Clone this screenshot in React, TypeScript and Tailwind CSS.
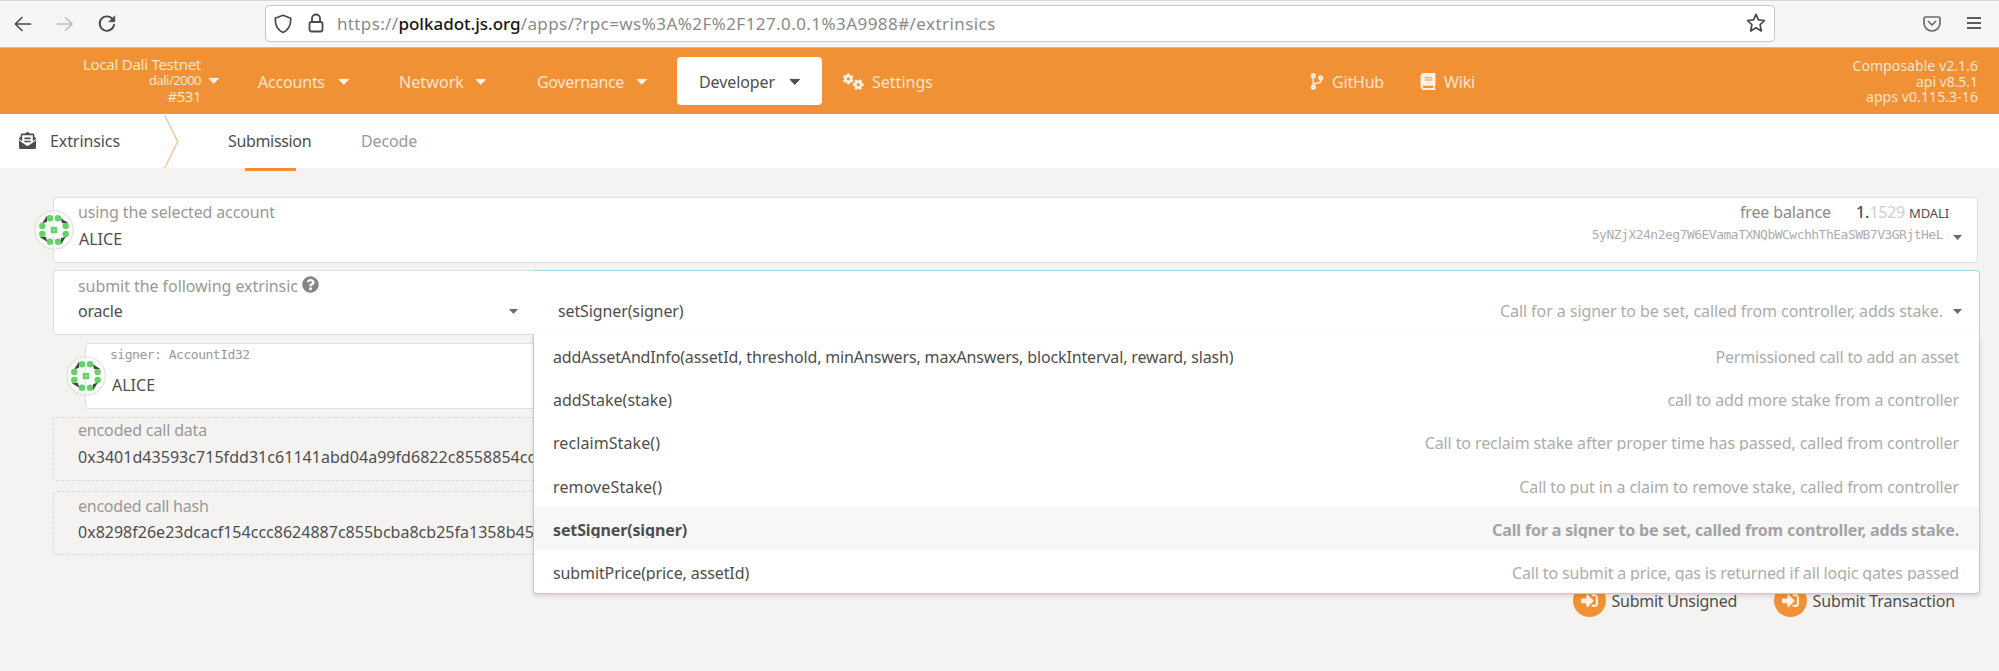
import type { ReactNode } from "react";
import { FaBook, FaCodeBranch, FaEnvelopeOpenText, FaQuestionCircle, FaSignInAlt } from "react-icons/fa";
import { FaGears } from "react-icons/fa6";

function Caret({ className = "" }: { className?: string }) {
  return (
    <svg viewBox="0 0 12 8" className={`h-[8px] w-[12px] shrink-0 ${className}`} fill="currentColor" stroke="currentColor" strokeWidth="1" strokeLinejoin="round">
      <path d="M1 1.4H10.6L5.8 6.4Z" />
    </svg>
  );
}

function SmallCaret({ className = "" }: { className?: string }) {
  return (
    <svg viewBox="0 0 9 5" className={`h-[5px] w-[9px] shrink-0 text-[#6a6a6a] ${className}`} fill="currentColor">
      <path d="M0 0H9L4.500 5Z" />
    </svg>
  );
}

function Avatar({ className = "" }: { className?: string }) {
  const turns = [0, 90, 180, 270];
  return (
    <svg viewBox="-20 -20 40 40" className={`absolute h-[40px] w-[40px] ${className}`}>
      <circle r="19.2" fill="#ffffff" fillOpacity="0.35" stroke="#dedede" strokeWidth="1.1" />
      {turns.map((t) => (
        <g key={t} transform={`rotate(${t})`}>
          <path d="M-11.8 -6.8L-7 -14.400V-8Z" fill="#444" />
          <circle cx="-4" cy="-11.700" r="3.2" fill="#64d16a" />
          <circle cx="4" cy="-11.700" r="3.2" fill="#64d16a" />
        </g>
      ))}
      <rect x="-3.2" y="-3.2" width="6.400" height="6.400" rx="0.800" fill="#64d16a" />
      <circle r="1" fill="#a9e6ac" />
    </svg>
  );
}

function BrowserBar() {
  return (
    <div className="flex h-[48px] shrink-0 border-t border-b border-t-[#d6d6d6] border-b-[#c9bfb3] bg-[#f6f6f6] pt-[4px] text-[#4a4a4a]">
      <svg viewBox="0 0 18 16" className="mt-[11px] ml-[14px] h-[16px] w-[18px]" fill="none" stroke="currentColor" strokeWidth="1.700" strokeLinecap="round" strokeLinejoin="round">
        <path d="M16.500 8H1.500M8 1.500L1.300 8L8 14.500" />
      </svg>
      <svg viewBox="0 0 18 16" className="mt-[11px] ml-[24px] h-[16px] w-[18px] text-[#bdbdbd]" fill="none" stroke="currentColor" strokeWidth="1.700" strokeLinecap="round" strokeLinejoin="round">
        <path d="M1 8H16M9.500 1.500L16.200 8L9.500 14.500" />
      </svg>
      <svg viewBox="0 0 18 18" className="mt-[10px] ml-[24px] h-[18px] w-[18px]" fill="none" stroke="currentColor" strokeWidth="1.900" strokeLinecap="round">
        <path d="M14.600 4.200A7.200 7.200 0 1 0 16 9.800" />
        <path d="M16.700 1.200V6.700H11.200Z" fill="currentColor" strokeWidth="0.800" strokeLinejoin="round" />
      </svg>
      <div className="ml-[149px] flex h-[37px] w-[1510px] rounded-[4px] border border-[#c9c9c9] bg-white">
        <svg viewBox="0 0 18 20" className="mt-[7.500px] ml-[8px] h-[20px] w-[18px]" fill="none" stroke="currentColor" strokeWidth="1.700" strokeLinejoin="round">
          <path d="M9 1.200L16.700 4.300C17 10.500 15.300 15.500 9 18.600C2.700 15.500 1 10.500 1.300 4.300Z" />
        </svg>
        <svg viewBox="0 0 16 20" className="mt-[7px] ml-[16px] h-[20px] w-[16px]" fill="none" stroke="currentColor" strokeWidth="1.800">
          <rect x="1.500" y="9" width="13" height="9.500" rx="2" />
          <path d="M4 9V5.500A4 4 0 0 1 12 5.500V9" />
        </svg>
        <div className="mt-[8px] ml-[13px] flex text-[17px] leading-[20px] text-[#8a8a8a]">
          <span className="tracking-[0.350px]">https://</span>
          <span className="font-medium tracking-[0px] text-[#161616]">polkadot.js.org</span>
          <span className="tracking-[0.430px]">/apps/?rpc=ws%3A%2F%2F127.0.0.1%3A9988#/extrinsics</span>
        </div>
        <svg viewBox="0 0 20 20" className="mt-[7px] mr-[8px] ml-auto h-[20px] w-[20px]" fill="none" stroke="currentColor" strokeWidth="1.700" strokeLinejoin="round">
          <path d="M10 1.300L12.500 6.800L18.500 7.500L14.100 11.600L15.300 18L10 14.700L4.700 18L5.900 11.600L1.500 7.500L7.500 6.800Z" />
        </svg>
      </div>
      <svg viewBox="0 0 18 16" className="mt-[11px] ml-[148px] h-[16px] w-[18px] text-[#6a6a6a]" fill="none" stroke="currentColor" strokeWidth="1.700" strokeLinecap="round" strokeLinejoin="round">
        <path d="M2.500 1H15.500A1.500 1.500 0 0 1 17 2.500V7A8 8 0 0 1 1 7V2.500A1.500 1.500 0 0 1 2.500 1Z" />
        <path d="M5.500 5.500L9 9L12.500 5.500" />
      </svg>
      <svg viewBox="0 0 14 12" className="mt-[12px] ml-[26px] h-[12px] w-[14px] text-[#5c5c5c]" stroke="currentColor" strokeWidth="1.800">
        <path d="M0 1H14M0 6H14M0 11H14" />
      </svg>
    </div>
  );
}

function Header() {
  return (
    <header className="flex h-[66px] shrink-0 bg-[#f19135] text-[16px] leading-[20px] text-[#fde4ce]">
      <div className="flex w-[201px] flex-col items-end pt-[7px] text-[15px] leading-[16px]">
        <span className="leading-[18px] tracking-[-0.270px]">Local Dali Testnet</span>
        <span className="mt-[-1px] text-[13px] tracking-[-0.500px]">dali/2000</span>
        <span className="tracking-[-0.500px]">#531</span>
      </div>
      <Caret className="mt-[29px] ml-[7px] text-[#fff1e4]" />
      <span className="mt-[24px] ml-[38px] w-[80px] tracking-[-0.190px]">Accounts</span>
      <Caret className="mt-[30px] text-[#fff1e4]" />
      <span className="mt-[24px] ml-[49px] w-[76px] tracking-[0.090px]">Network</span>
      <Caret className="mt-[30px] text-[#fff1e4]" />
      <span className="mt-[24px] ml-[50px] w-[99px] tracking-[-0.320px]">Governance</span>
      <Caret className="mt-[30px] text-[#fff1e4]" />
      <div className="mt-[9px] ml-[29px] flex h-[48px] w-[145px] rounded-[4px] bg-white text-[#4e4e4e]">
        <span className="mt-[15px] ml-[22px] w-[90px] tracking-[-0.090px]">Developer</span>
        <Caret className="mt-[21px]" />
      </div>
      <FaGears className="mt-[25px] ml-[21px] h-[17px] w-[21px] text-[#fff1e4]" />
      <span className="mt-[24px] ml-[8px] w-[61px] tracking-[0.010px]">Settings</span>
      <FaCodeBranch className="mt-[25px] ml-[376px] h-[17px] w-[16px] text-[#fff1e4]" />
      <span className="mt-[24px] ml-[7px] w-[88px] tracking-[-0.190px]">GitHub</span>
      <FaBook className="mt-[25px] h-[17px] w-[16px] text-[#fff1e4]" />
      <span className="mt-[24px] ml-[8px] tracking-[-0.170px]">Wiki</span>
      <div className="mr-[21px] ml-auto flex flex-col items-end pt-[10px] text-[14px] leading-[16px]">
        <span className="tracking-[0.060px]">Composable v2.1.6</span>
        <span className="tracking-[-0.040px]">api v8.5.1</span>
        <span className="mt-[-1px] tracking-[0.090px]">apps v0.115.3-16</span>
      </div>
    </header>
  );
}

function TabBar() {
  return (
    <nav className="flex h-[54px] shrink-0 bg-white text-[16px] leading-[20px] text-[#4e4e4e]">
      <FaEnvelopeOpenText className="mt-[18px] ml-[19px] h-[17px] w-[17px]" />
      <span className="mt-[17px] ml-[14px] w-[114px] tracking-[-0.090px]">Extrinsics</span>
      <svg viewBox="0 0 16 54" className="h-[54px] w-[16px]" fill="none" stroke="#f8c08c" strokeWidth="1.300">
        <path d="M0.700 1L13.700 27.500L0.700 54" />
      </svg>
      <div className="ml-[48px] flex w-[133px] flex-col">
        <span className="mt-[17px] tracking-[-0.340px]">Submission</span>
        <span className="mt-[17px] ml-[17px] h-[3px] w-[51px] shrink-0 bg-[#f19135]" />
      </div>
      <span className="mt-[17px] tracking-[-0.150px] text-[#999]">Decode</span>
    </nav>
  );
}

function Encoded({ children, className }: { children: ReactNode; className: string }) {
  return (
    <div className={`ml-[53px] h-[64px] w-[1925px] shrink-0 overflow-hidden rounded-[4px] border border-dashed border-[#dad9d7] pl-[24px] leading-[20px] whitespace-nowrap ${className}`}>
      {children}
    </div>
  );
}

function MenuItem({ name, info, active = false }: { name: ReactNode; info: ReactNode; active?: boolean }) {
  return (
    <div className={`flex h-[43.200px] justify-between pt-[15px] pr-[20px] pl-[19px] leading-[16px] whitespace-nowrap ${active ? "bg-[#f7f7f7] font-bold" : ""}`}>
      <div className="h-[16px] overflow-hidden">{name}</div>
      <div className={`h-[16px] overflow-hidden ${active ? "text-[#a3a3a3]" : "text-[#acacac]"}`}>{info}</div>
    </div>
  );
}

function Menu() {
  return (
    <div className="absolute top-[334px] left-[533px] w-[1447px] rounded-b-[4px] border border-t-0 border-[#a9d3df] bg-white shadow-[0_2px_4px_rgba(34,36,38,0.15)]">
      <MenuItem
        name={<span className="tracking-[-0.150px]">addAssetAndInfo(assetId, threshold, minAnswers, maxAnswers, blockInterval, reward, slash)</span>}
        info={<span className="tracking-[-0.200px]">Permissioned call to add an asset</span>}
      />
      <MenuItem
        name={<span className="tracking-[-0.020px]">addStake(stake)</span>}
        info={<span className="tracking-[-0.120px]">call to add more stake from a controller</span>}
      />
      <MenuItem
        name={<span className="tracking-[0.080px]">reclaimStake()</span>}
        info={<span className="tracking-[-0.100px]">Call to reclaim stake after proper time has passed, called from controller</span>}
      />
      <MenuItem
        name={<span className="tracking-[0.120px]">removeStake()</span>}
        info={<span className="tracking-[-0.110px]">Call to put in a claim to remove stake, called from controller</span>}
      />
      <MenuItem
        active
        name={<span className="tracking-[-0.130px]">setSigner(signer)</span>}
        info={<span className="tracking-[-0.150px]">Call for a signer to be set, called from controller, adds stake.</span>}
      />
      <MenuItem
        name={<span className="tracking-[-0.110px]">submitPrice(price, assetId)</span>}
        info={<span className="tracking-[-0.150px]">Call to submit a price, gas is returned if all logic gates passed</span>}
      />
    </div>
  );
}

export default function App() {
  return (
    <div className="relative flex h-[671px] w-[1999px] flex-col overflow-hidden bg-[#f4f3f1] font-['Noto_Sans',sans-serif] text-[16px] text-[#4e4e4e]">
      <BrowserBar />
      <Header />
      <TabBar />

      <section className="relative mt-[29px] ml-[53px] flex h-[66px] w-[1925px] shrink-0 justify-between rounded-[4px] border border-[#dfdfde] bg-white leading-[20px]">
        <Avatar className="top-[12px] left-[-20.500px]" />
        <div className="pt-[4px] pl-[24px]">
          <div className="tracking-[-0.130px] text-[#999]">using the selected account</div>
          <div className="mt-[7px] ml-[1px]">ALICE</div>
        </div>
        <div className="flex flex-col items-end pt-[4px]">
          <div className="mr-[28px] flex items-baseline">
            <span className="mr-[25px] tracking-[-0.130px] text-[#8a8a8a]">free balance</span>
            <span className="font-medium">1.</span>
            <span className="tracking-[-0.250px] text-[#cfcfcf]">1529</span>
            <span className="ml-[4px] text-[13px] tracking-[-0.110px]">MDALI</span>
          </div>
          <div className="mt-[3px] mr-[15px] flex items-center">
            <span className="font-['DejaVu_Sans_Mono',monospace] text-[13px] leading-[18px] tracking-[-0.510px] text-[#adadad]">5yNZjX24n2eg7W6EVamaTXNQbWCwchhThEaSWB7V3GRjtHeL</span>
            <SmallCaret className="mt-[5px] ml-[10px]" />
          </div>
        </div>
      </section>

      <section className="mt-[7px] ml-[53px] flex h-[65px] w-[1927px] shrink-0 leading-[20px]">
        <div className="w-[481px] rounded-l-[4px] border border-r-0 border-[#dfdfde] bg-white pl-[24px]">
          <div className="mt-[5px] flex text-[#999]">
            <span className="w-[224px] tracking-[-0.060px]">submit the following extrinsic</span>
            <FaQuestionCircle className="h-[17px] w-[17px] text-[#858585]" />
          </div>
          <div className="mt-[5px] flex items-center justify-between pr-[16px]">
            <span className="tracking-[-0.210px]">oracle</span>
            <SmallCaret className="mt-[1px]" />
          </div>
        </div>
        <div className="flex flex-1 items-start justify-between rounded-tr-[4px] border-t border-r border-[#a9d3df] bg-white pt-[30px] pr-[17px] pl-[24px]">
          <span className="tracking-[-0.120px]">setSigner(signer)</span>
          <div className="flex items-center">
            <span className="tracking-[-0.070px] text-[#acacac]">Call for a signer to be set, called from controller, adds stake.</span>
            <SmallCaret className="mt-[1px] ml-[10px]" />
          </div>
        </div>
      </section>

      <section className="relative mt-[8px] ml-[85px] h-[66px] w-[1893px] shrink-0 rounded-[4px] border border-[#dfdfde] bg-white pl-[24px]">
        <Avatar className="top-[12px] left-[-20px]" />
        <div className="pt-[3px] font-['DejaVu_Sans_Mono',monospace] text-[13px] leading-[16px] tracking-[-0.480px] text-[#999]">signer: AccountId32</div>
        <div className="mt-[12px] ml-[2px] leading-[20px]">ALICE</div>
      </section>

      <Encoded className="mt-[8px]">
        <div className="mt-[2px] tracking-[-0.160px] text-[#999]">encoded call data</div>
        <div className="mt-[7px] tracking-[0.040px]">0x3401d43593c715fdd31c61141abd04a99fd6822c8558854cc</div>
      </Encoded>
      <Encoded className="mt-[10px]">
        <div className="mt-[4px] tracking-[-0.240px] text-[#999]">encoded call hash</div>
        <div className="mt-[6px] tracking-[0.010px]">0x8298f26e23dcacf154ccc8624887c855bcba8cb25fa1358b45</div>
      </Encoded>

      <div className="mt-[29px] flex shrink-0 items-center justify-end pr-[44px] leading-[20px]">
        <span className="flex h-[33px] w-[33px] items-center justify-center rounded-full bg-[#f19135] text-[#fff1e4]">
          <FaSignInAlt className="h-[17px] w-[17px]" />
        </span>
        <span className="ml-[6px] w-[162px] tracking-[-0.270px]">Submit Unsigned</span>
        <span className="flex h-[33px] w-[33px] items-center justify-center rounded-full bg-[#f19135] text-[#fff1e4]">
          <FaSignInAlt className="h-[17px] w-[17px]" />
        </span>
        <span className="ml-[6px] tracking-[-0.120px]">Submit Transaction</span>
      </div>

      <Menu />
    </div>
  );
}
